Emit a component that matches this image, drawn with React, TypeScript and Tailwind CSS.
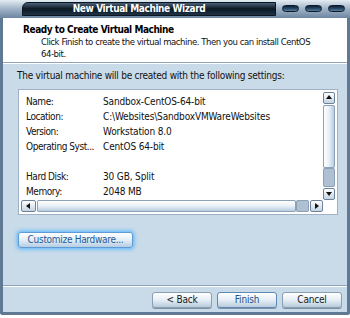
import React from "react";

const font = { fontFamily: "'DejaVu Sans Condensed', 'DejaVu Sans', 'Liberation Sans', sans-serif" };

const rows: [string, string][] = [
  ["Name:", "Sandbox-CentOS-64-bit"],
  ["Location:", "C:\\Websites\\SandboxVMWareWebsites"],
  ["Version:", "Workstation 8.0"],
  ["Operating Syst...", "CentOS 64-bit"],
  ["", ""],
  ["Hard Disk:", "30 GB, Split"],
  ["Memory:", "2048 MB"],
];

function Pill() {
  return (
    <div className="w-[17px] h-[7px] rounded-full bg-gradient-to-b from-[#0d2238] via-[#274866] to-[#5d7d9c] border border-[#0b1b2c]" />
  );
}

function Arrow({ dir }: { dir: "up" | "down" | "left" | "right" }) {
  const d = {
    up: "M1 5 L4 1 L7 5 Z",
    down: "M1 2 L4 6 L7 2 Z",
    left: "M5 1 L1 4 L5 7 Z",
    right: "M2 1 L6 4 L2 7 Z",
  }[dir];
  return (
    <svg width="8" height="8" viewBox="0 0 8 8">
      <path d={d} fill="#111" />
    </svg>
  );
}

function ScrollBtn({ dir }: { dir: "up" | "down" | "left" | "right" }) {
  return (
    <div className="w-full h-full flex items-center justify-center rounded-[2px] border border-[#6d8299] bg-gradient-to-b from-[#ffffff] to-[#c3d4e3]">
      <Arrow dir={dir} />
    </div>
  );
}

function Button({ children, primary }: { children: React.ReactNode; primary?: boolean }) {
  return (
    <button
      className={
        "w-[60px] h-[16px] rounded-[3px] border text-[10px] leading-none tracking-[-0.2px] bg-gradient-to-b from-[#ffffff] via-[#e6eef5] to-[#b9ccdd] shadow-[0_1px_0_#7f93a8] " +
        (primary ? "border-[#5f89b4] text-[#1d4f86]" : "border-[#8a9db1] text-[#1a1a1a]")
      }
      style={font}
    >
      {children}
    </button>
  );
}

export default function App() {
  return (
    <div className="w-[350px] h-[318px] bg-white overflow-hidden flex flex-col" style={font}>
      {/* Title bar */}
      <div className="h-[18px] flex bg-gradient-to-b from-[#e4ecf3] via-[#9fb3c7] to-[#6d86a0]">
        <div className="w-[22px]" />
        <div className="w-[254px] mt-[2px] h-[14px] rounded-tl-[6px] border border-[#0b1621] bg-gradient-to-b from-[#4b6178] via-[#0c1824] to-[#1f3346] flex items-center justify-center pr-[20px]">
          <span className="text-white text-[10px] font-bold leading-none tracking-[-0.4px]">
            New Virtual Machine Wizard
          </span>
        </div>
        <div className="flex-1 flex items-start pt-[5px] pl-[6px] gap-[6px]">
          <Pill />
          <Pill />
          <Pill />
        </div>
      </div>

      {/* Window body */}
      <div className="flex-1 flex flex-col border-x-[3px] border-b-[3px] border-[#5f7893] mb-[3px] rounded-b-[3px]">
        {/* Header */}
        <div className="h-[45px] bg-white pl-[20px] pt-[5px] border-b border-[#8ea4ba]">
          <div className="text-[10px] font-bold leading-[13px] text-black tracking-[-0.45px]">
            Ready to Create Virtual Machine
          </div>
          <div className="pl-[18px] pr-[30px] text-[9.5px] leading-[12px] text-[#111] tracking-[-0.45px]">
            Click Finish to create the virtual machine. Then you can install CentOS 64-bit.
          </div>
        </div>

        {/* Main */}
        <div className="flex-1 bg-[#c9dbe9] flex flex-col border-t border-white">
          <div className="pl-[14px] pt-[5px] text-[10px] leading-[13px] text-[#111] tracking-[-0.25px]">
            The virtual machine will be created with the following settings:
          </div>

          <div className="ml-[15px] mr-[9px] mt-[7px] h-[126px] bg-white border border-[#9fb2c5] p-[2px] grid grid-cols-[1fr_12px] grid-rows-[1fr_12px]">
            <div className="pl-[5px] pt-[2px]">
              {rows.map(([k, v], i) => (
                <div key={i} className="flex h-[15px] items-center text-[10px] text-[#111]">
                  <span className="w-[77px] whitespace-nowrap tracking-[-0.45px]">{k}</span>
                  <span className="whitespace-nowrap tracking-[-0.15px]">{v}</span>
                </div>
              ))}
            </div>
            <div className="flex flex-col">
              <div className="h-[12px]"><ScrollBtn dir="up" /></div>
              <div className="flex-1 flex flex-col bg-[#dde7f0] my-[1px]">
                <div className="flex-1 rounded-[2px] border border-[#8da1b6] bg-gradient-to-r from-[#ffffff] via-[#e8f0f7] to-[#b8cde0]" />
                <div className="h-[19px] rounded-[2px] border border-[#8da1b6] bg-[#aec0d2]" />
              </div>
              <div className="h-[12px]"><ScrollBtn dir="down" /></div>
            </div>
            <div className="flex">
              <div className="w-[15px]"><ScrollBtn dir="left" /></div>
              <div className="flex-1 flex bg-[#dde7f0] mx-[1px]">
                <div className="flex-1 rounded-[2px] border border-[#8da1b6] bg-gradient-to-b from-[#ffffff] via-[#e8f0f7] to-[#b8cde0]" />
                <div className="w-[13px] rounded-[2px] border border-[#8da1b6] bg-[#aec0d2]" />
              </div>
              <div className="w-[13px]"><ScrollBtn dir="right" /></div>
            </div>
            <div className="bg-white" />
          </div>

          <div className="pl-[15px] mt-[11px]">
            <button
              className="w-[115px] h-[16px] rounded-[3px] border border-[#5e9ad3] text-[10px] leading-none tracking-[-0.3px] text-[#1f5a96] bg-gradient-to-b from-[#ffffff] via-[#e4eef7] to-[#b5cde2] shadow-[0_0_4px_1px_#4fb3ff]"
              style={font}
            >
              Customize Hardware...
            </button>
          </div>

          <div className="flex-1" />

          <div className="h-[27px] border-t border-[#8ea4ba] flex items-start justify-end gap-[5px] pr-[5px] pt-[6px] shadow-[inset_0_1px_0_#ffffff]">
            <Button>&lt; Back</Button>
            <Button primary>Finish</Button>
            <Button>Cancel</Button>
          </div>
        </div>
      </div>
    </div>
  );
}
